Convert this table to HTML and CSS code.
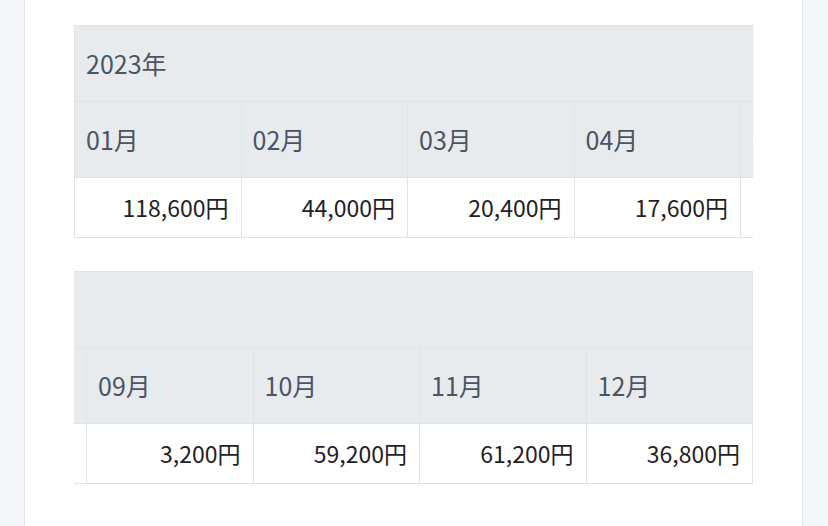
FILE: index.html
```html
<!DOCTYPE html>
<html lang="ja">
<head>
<meta charset="utf-8">
<title>月別売上</title>
<link rel="stylesheet" href="styles.css">
</head>
<body>
<div class="page">
  <div class="card">
    <div class="scroller">
      <table class="months">
        <thead>
          <tr><th class="year" colspan="12">2023年</th></tr>
          <tr>
            <th>01月</th><th>02月</th><th>03月</th><th>04月</th><th>05月</th><th>06月</th>
            <th>07月</th><th>08月</th><th>09月</th><th>10月</th><th>11月</th><th>12月</th>
          </tr>
        </thead>
        <tbody>
          <tr>
            <td>118,600円</td><td>44,000円</td><td>20,400円</td><td>17,600円</td><td>12,000円</td><td>8,800円</td>
            <td>6,400円</td><td>4,800円</td><td>3,200円</td><td>59,200円</td><td>61,200円</td><td>36,800円</td>
          </tr>
        </tbody>
      </table>
    </div>
    <div class="scroller scroller-end">
      <table class="months">
        <thead>
          <tr><th class="year" colspan="12">2023年</th></tr>
          <tr>
            <th>01月</th><th>02月</th><th>03月</th><th>04月</th><th>05月</th><th>06月</th>
            <th>07月</th><th>08月</th><th>09月</th><th>10月</th><th>11月</th><th>12月</th>
          </tr>
        </thead>
        <tbody>
          <tr>
            <td>118,600円</td><td>44,000円</td><td>20,400円</td><td>17,600円</td><td>12,000円</td><td>8,800円</td>
            <td>6,400円</td><td>4,800円</td><td>3,200円</td><td>59,200円</td><td>61,200円</td><td>36,800円</td>
          </tr>
        </tbody>
      </table>
    </div>
  </div>
</div>
</body>
</html>
```

FILE: styles.css
```css
html, body {
  margin: 0;
  padding: 0;
  background: #f4f6f9;
  font-family: "Noto Sans CJK JP", "Noto Sans", sans-serif;
}

.page {
  padding: 0 25px 0 24px;
  height: 526px;
  overflow: hidden;
}

.card {
  background: #ffffff;
  border-left: 1px solid #e1e4e9;
  border-right: 1px solid #e1e4e9;
  padding: 25px 49px 40px 49px;
  display: flex;
  flex-direction: column;
  gap: 33px;
  min-height: 600px;
}

.scroller {
  overflow: hidden;
}

.scroller-end {
  direction: rtl;
}

.months {
  direction: ltr;
  border-collapse: collapse;
  table-layout: fixed;
  width: 1999px;
  font-size: 25px;
  line-height: 35px;
}

.months th,
.months td {
  border: 1px solid #dfe2e6;
  padding: 20px 12px 20px 11px;
  white-space: nowrap;
  overflow: hidden;
}

.months th {
  background: #e8ebee;
  color: #4b5463;
  font-weight: 400;
  text-align: left;
}

.months td {
  background: #ffffff;
  color: #1f2125;
  font-size: 23px;
  text-align: right;
  padding-top: 12px;
  padding-bottom: 12px;
}

.months .year {
  color: #4b5463;
}
```
